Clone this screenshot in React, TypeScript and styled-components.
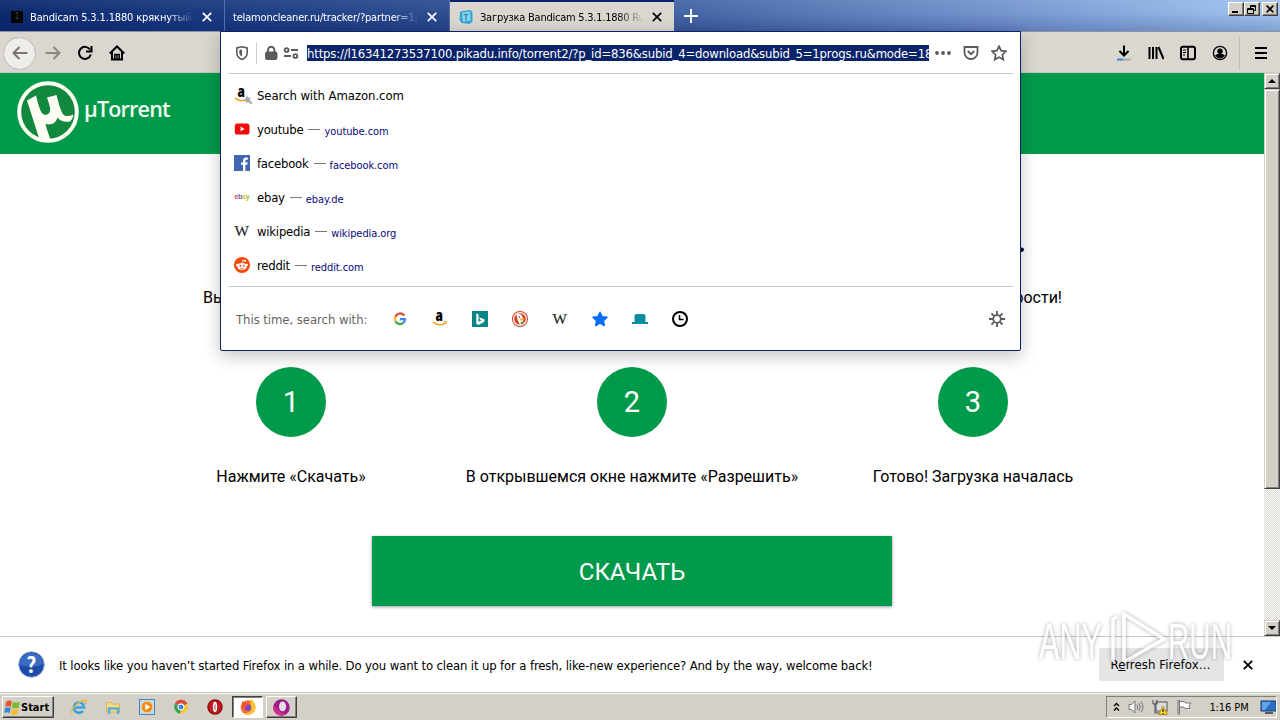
import React from 'react';
import styled, { createGlobalStyle, css } from 'styled-components';

const UI = `"DejaVu Sans Condensed", "DejaVu Sans", sans-serif`;
const WEB = `Roboto, sans-serif`;
const GREEN = '#019a4b';

const Global = createGlobalStyle`
  * { box-sizing: border-box; }
  body { margin: 0; overflow: hidden; background: #fff; }
  svg { display: block; flex: none; }
`;

const Screen = styled.div`
  position: relative;
  width: 1280px;
  height: 720px;
  display: flex;
  flex-direction: column;
  overflow: hidden;
  font-family: ${UI};
  font-stretch: condensed;
  color: #000;
`;

const Label = styled.span<{ $size?: number; $ls?: number; $color?: string }>`
  font-size: ${p => p.$size ?? 13}px;
  letter-spacing: ${p => p.$ls ?? 0}px;
  color: ${p => p.$color ?? 'inherit'};
  white-space: nowrap;
`;

/* Tab strip */
const TabStrip = styled.header`
  height: 32px;
  flex: none;
  display: flex;
  align-items: flex-start;
  background: linear-gradient(180deg, rgba(255,255,255,0.06), rgba(255,255,255,0) 40%, rgba(0,10,90,0.2)),
    linear-gradient(90deg, #0c2a6e 0, #1d3e84 240px, #3e5f9f 640px, #7596cf 1000px, #a2c6f0 1280px);
  border-bottom: 1px solid #8c93a4;
`;

const Tab = styled.div<{ $width: number; $active?: boolean }>`
  width: ${p => p.$width}px;
  height: 31px;
  display: flex;
  align-items: center;
  padding: 3px 12px 0 8px;
  color: #fff;
  border-right: 1px solid #5670a8;
  ${p => p.$active && css`
    color: #000;
    background: #dad6d0;
    border-top: 2px solid #0a246a;
    border-right: 0;
    padding-top: 1px;
  `}
`;

const TabTitle = styled.div<{ $gap?: number }>`
  flex: 1;
  overflow: hidden;
  margin: 0 8px 0 ${p => p.$gap ?? 0}px;
  display: flex;
  mask-image: linear-gradient(90deg, #000 calc(100% - 26px), transparent);
`;

const BlackFavicon = styled.i`
  width: 12px;
  height: 12px;
  margin-left: 3px;
  background: #050505;
  color: #444;
  font: normal 8px/12px ${UI};
  text-align: center;
`;

const NewTab = styled.div`
  padding: 9px 0 0 9px;
  flex: 1;
`;

const WindowButtons = styled.div`
  display: flex;
  padding: 2px 2px 0 0;
`;

const WinButton = styled.div<{ $gap?: boolean }>`
  width: 16px;
  height: 14px;
  margin-left: ${p => (p.$gap ? 2 : 0)}px;
  display: flex;
  align-items: center;
  justify-content: center;
  background: #d4d0c8;
  border: 1px solid;
  border-color: #fff #404040 #404040 #fff;
  box-shadow: inset -1px -1px #808080;
`;

/* Navigation toolbar */
const Toolbar = styled.nav`
  height: 41px;
  flex: none;
  display: flex;
  align-items: center;
  justify-content: space-between;
  background: #dad6d0;
  border-bottom: 1px solid #c9cac4;
  padding-top: 2px;
`;

const NavLeft = styled.div`
  display: flex;
  align-items: center;
  gap: 16px;
  padding-left: 3px;
`;

const BackButton = styled.div`
  width: 33px;
  height: 33px;
  margin-right: -7px;
  border-radius: 50%;
  border: 1px solid #bdb9b3;
  background: #efedea;
  display: flex;
  align-items: center;
  justify-content: center;
`;

const NavRight = styled.div`
  display: flex;
  align-items: center;
  gap: 16px;
  padding-right: 11px;
`;

const MenuGroup = styled.div`
  display: flex;
  align-items: center;
  gap: 13px;
  margin-left: -5px;
`;

const Divider = styled.i<{ $h: number; $color: string }>`
  width: 1px;
  height: ${p => p.$h}px;
  background: ${p => p.$color};
`;

/* Page */
const Viewport = styled.div`
  height: 563px;
  flex: none;
  display: flex;
`;

const Page = styled.main`
  width: 1264px;
  display: flex;
  flex-direction: column;
  align-items: center;
  font-family: ${WEB};
  font-stretch: normal;
`;

const SiteHeader = styled.div`
  align-self: stretch;
  height: 81px;
  flex: none;
  background: ${GREEN};
  padding: 8px 0 0 17px;
  display: flex;
  gap: 5px;
`;

const SiteName = styled.span`
  font: 600 21.5px/30px "Open Sans", sans-serif;
  letter-spacing: -0.8px;
  color: #f2fbf2;
  padding-top: 13px;
`;

const Heading = styled.h1`
  width: 788px;
  height: 60px;
  margin: 57px 0 0;
  text-align: right;
  font-size: 32px;
  line-height: 60px;
`;

const Lead = styled.p`
  width: 860px;
  margin: 17px 0 0;
  padding-left: 1px;
  display: flex;
  justify-content: space-between;
  font-size: 16px;
  line-height: 20px;
`;

const Steps = styled.div`
  display: grid;
  grid-template-columns: repeat(3, 341px);
  margin-top: 59px;
`;

const Step = styled.div`
  display: flex;
  flex-direction: column;
  align-items: center;
`;

const StepNumber = styled.div`
  width: 70px;
  height: 70px;
  border-radius: 50%;
  background: ${GREEN};
  color: #fff;
  font-size: 29px;
  line-height: 71px;
  text-align: center;
`;

const StepText = styled.div`
  margin-top: 30px;
  font-size: 16px;
  line-height: 20px;
  white-space: nowrap;
`;

const Download = styled.button`
  width: 520px;
  height: 70px;
  margin-top: 49px;
  padding: 2px 0 0;
  border: 0;
  background: ${GREEN};
  box-shadow: 0 1px 3px rgba(0, 0, 0, 0.4);
  color: #fff;
  font: 400 24px ${WEB};
`;

const Scrollbar = styled.div`
  width: 16px;
  display: flex;
  flex-direction: column;
  background: repeating-conic-gradient(#fff 0 25%, #d9d6d0 0 50%) 0 0 / 2px 2px;
`;

const Bevel = styled.div<{ $h: number }>`
  height: ${p => p.$h}px;
  flex: none;
  background: #d4d0c8;
  border: 1px solid;
  border-color: #d4d0c8 #404040 #404040 #d4d0c8;
  box-shadow: inset 1px 1px #fff, inset -1px -1px #808080;
  display: flex;
  align-items: center;
  justify-content: center;
`;

const Track = styled.div`flex: 1;`;

/* Address dropdown */
const Dropdown = styled.section`
  position: absolute;
  left: 220px;
  top: 31px;
  width: 801px;
  height: 320px;
  padding: 0 7px;
  background: #fff;
  border: 1px solid #0a246a;
  border-radius: 0 0 2px 2px;
  box-shadow: 0 5px 18px rgba(0, 0, 0, 0.24);
`;

const AddressRow = styled.div`
  height: 42px;
  display: flex;
  align-items: center;
  justify-content: space-between;
  border-bottom: 1px solid #cbc9c6;
  padding: 1px 6px 0 6px;
`;

const AddressIcons = styled.div<{ $gap: number }>`
  display: flex;
  align-items: center;
  gap: ${p => p.$gap}px;
`;

const Url = styled.div`
  width: 622px;
  height: 16px;
  margin: 0 -2px 0 0;
  overflow: hidden;
  background: #0a246a;
  color: #fff;
  line-height: 17px;
  display: flex;
`;

const Results = styled.div`
  height: 213px;
  padding-top: 4px;
  border-bottom: 1px solid #cbc9c6;
`;

const Result = styled.div`
  height: 34px;
  display: flex;
  align-items: center;
  padding-left: 6px;

  & > svg { margin-right: 7px; }
`;

const Dash = styled.i`
  width: 12px;
  height: 1px;
  margin: 0 4px 0 5px;
  background: #777;
`;

const Domain = styled(Label)`padding-top: 4px;`;

const Engines = styled.div`
  height: 64px;
  display: flex;
  align-items: center;
  padding: 0 8px;
`;

const EngineIcons = styled.div`
  flex: 1;
  display: flex;
  gap: 24px;
`;

const EnginePrompt = styled.div`
  width: 156px;
  padding-bottom: 2px;
  color: #66645f;
`;

/* Notification bar */
const Notice = styled.aside`
  height: 57px;
  flex: none;
  display: flex;
  align-items: center;
  border-top: 1px solid #c9c8c5;
  border-bottom: 1px solid #c2bfb9;
  padding: 0 27px 0 18px;
`;

const NoticeText = styled.div`
  flex: 1;
  padding-left: 14px;
`;

const RefreshButton = styled.div`
  width: 125px;
  height: 33px;
  margin-right: 19px;
  padding-right: 2px;
  background: #e5e5e5;
  display: flex;
  align-items: center;
  justify-content: center;
`;

/* Taskbar */
const Taskbar = styled.footer`
  height: 27px;
  flex: none;
  display: flex;
  align-items: flex-start;
  background: #d4d0c8;
  border-top: 1px solid #fff;
  padding: 2px 3px 0 2px;
`;

const StartButton = styled.div`
  width: 52px;
  height: 22px;
  display: flex;
  align-items: center;
  padding-left: 1px;
  border: 1px solid;
  border-color: #fff #404040 #404040 #fff;
  box-shadow: inset -1px -1px #808080;
  font-weight: bold;
`;

const QuickLaunch = styled.div`
  flex: 1;
  display: flex;
  align-items: center;
  gap: 18px;
  height: 22px;
  padding-left: 17px;
`;

const Windows = styled.div`
  display: flex;
  gap: 3px;
  margin-left: -9px;
`;

const TaskButton = styled.div<{ $pressed?: boolean }>`
  width: 31px;
  height: 22px;
  display: flex;
  align-items: center;
  justify-content: center;
  background: ${p => (p.$pressed ? '#fff' : '#d4d0c8')};
  border: 1px solid;
  border-color: ${p => (p.$pressed ? '#404040 #fff #fff #404040' : '#fff #404040 #404040 #fff')};
  box-shadow: ${p => (p.$pressed ? 'inset 1px 1px #808080' : 'inset -1px -1px #808080')};
`;

const Tray = styled.div`
  width: 171px;
  height: 22px;
  display: flex;
  align-items: center;
  gap: 8px;
  padding: 0 0 0 6px;
  border: 1px solid;
  border-color: #808080 #fff #fff #808080;
`;

const Clock = styled.div`
  flex: 1;
  display: flex;
  justify-content: center;
  padding-left: 6px;
`;

const Watermark = styled.svg`
  position: absolute;
  left: 1032px;
  top: 602px;
  pointer-events: none;
  opacity: 0.85;
  filter: drop-shadow(0 0 2px rgba(0, 0, 0, 0.4));
`;

const Cross = ({ size = 10, color = '#000', w = 2 }: { size?: number; color?: string; w?: number }) => (
  <svg width={size} height={size} viewBox="0 0 10 10" stroke={color} strokeWidth={w} fill="none">
    <path d="M.8.8l8.4 8.4M9.2.8L.8 9.2" />
  </svg>
);

const Icon = ({ children, size = 16, color = '#000', w = 2 }: { children: React.ReactNode; size?: number; color?: string; w?: number }) => (
  <svg width={size} height={size} viewBox="0 0 16 16" fill="none" stroke={color} strokeWidth={w}>{children}</svg>
);

const Amazon = ({ search }: { search?: boolean }) => (
  <svg width="16" height="16" viewBox="0 0 16 16" overflow="visible">
    <text x="3.600" y="9.600" fontFamily="Open Sans, sans-serif" fontWeight="800" fontSize="15">a</text>
    <path d="M1 11.200c4 3.300 9 3 12.400.6" fill="none" stroke="#f6a51b" strokeWidth="1.600" />
    {search
      ? <path d="M13 8.500l1.300 2.200 2.700-.4-1.500 2.300 3 4-1.300 1-3.400-3-1.600 1.900-.6-2.700-2.600-.8 2.500-1.300z" fill="#aaa9ad" />
      : <path d="M11.500 10.800l3-.2-.8 2.800" fill="none" stroke="#f6a51b" />}
  </svg>
);

const Wiki = () => (
  <svg width="16" height="16" viewBox="0 0 16 16">
    <text x="0.500" y="12.800" fontFamily="Liberation Serif, serif" fontSize="15.500" textLength="14.500" lengthAdjust="spacingAndGlyphs" fill="#222" stroke="#222" strokeWidth=".15">W</text>
  </svg>
);

const Youtube = () => (
  <svg width="16" height="16" viewBox="0 0 16 16">
    <rect x="0.800" y="2.500" width="14.700" height="11" rx="2.600" fill="#f00b0b" />
    <path d="M6.600 5.600v4.600L10.600 8z" fill="#fff" />
  </svg>
);

const Facebook = () => (
  <svg width="16" height="16" viewBox="0 0 16 16">
    <rect width="16" height="16" fill="#4267b2" />
    <path d="M9 16V9.800H7V7.500h2V5.800C9 3.600 10.300 2.600 12 2.600h1.800v2.200h-1.200c-1 0-1.200.5-1.200 1.200v1.500h2.300l-.3 2.300h-2V16z" fill="#fff" />
  </svg>
);

const Ebay = () => (
  <svg width="16" height="16" viewBox="0 0 16 16" overflow="visible">
    <text x="0.400" y="10" fontFamily="Liberation Sans, sans-serif" fontSize="8" textLength="15" lengthAdjust="spacingAndGlyphs" strokeWidth=".2">
      <tspan fill="#d8354a" stroke="#d8354a">e</tspan><tspan fill="#4550c0" stroke="#4550c0">b</tspan><tspan fill="#e6b92c" stroke="#e6b92c">a</tspan><tspan fill="#8bbd20" stroke="#8bbd20">y</tspan>
    </text>
  </svg>
);

const Reddit = () => (
  <svg width="16" height="16" viewBox="0 0 16 16">
    <circle cx="8" cy="8" r="8" fill="#f9490c" />
    <ellipse cx="8" cy="9.400" rx="4.600" ry="3.400" fill="#fff" />
    <circle cx="3.400" cy="8" r="1.300" fill="#fff" />
    <circle cx="12.600" cy="8" r="1.300" fill="#fff" />
    <circle cx="11" cy="3.800" r="1.100" fill="#fff" />
    <path d="M8 6.200l.7-2.900 2.200.5" fill="none" stroke="#fff" strokeWidth=".8" />
    <circle cx="6.300" cy="8.700" r="1" fill="#f9490c" />
    <circle cx="9.700" cy="8.700" r="1" fill="#f9490c" />
    <path d="M6 11q2 1.100 4 0" fill="none" stroke="#f9490c" strokeWidth=".7" />
  </svg>
);

const Google = () => (
  <svg width="16" height="16" viewBox="0 0 16 16" fill="none" strokeWidth="2.200">
    <path d="M12.300 4.600A5 5 0 0 0 3.500 5.800" stroke="#ea4335" />
    <path d="M3.500 5.800a5 5 0 0 0 0 4.400" stroke="#fbbc05" />
    <path d="M3.500 10.200a5 5 0 0 0 7.900 1.500" stroke="#34a853" />
    <path d="M11.400 11.700A5 5 0 0 0 13 8.200H8" stroke="#4285f4" />
  </svg>
);

const Bing = () => (
  <svg width="16" height="16" viewBox="0 0 16 16">
    <rect width="16" height="16" fill="#0c8484" />
    <path d="M4.300 2.500l2.200.8v7.600l3-1.600-1.500-.7-.9-2.300 5.200 1.900v2.500l-5.800 3.300-2.200-1.300z" fill="#fff" />
  </svg>
);

const Duck = () => (
  <svg width="16" height="16" viewBox="0 0 16 16">
    <circle cx="8" cy="8" r="8" fill="#d43a24" />
    <circle cx="8" cy="8" r="6.400" fill="none" stroke="#fff" strokeWidth="1.300" />
    <path d="M4.500 3.500c3-1.500 6.500.5 6.300 3.500L11.500 13l-3.500 1.300L5.500 9z" fill="#fff" />
    <circle cx="7.500" cy="6" r=".8" fill="#345" />
    <path d="M8 7.600l4.500-.4-.4 2-3.900.4z" fill="#fbb02d" />
    <path d="M8.500 11l3-.8v3l-2.600.2z" fill="#5aa83c" />
  </svg>
);

const STAR = 'M8 1.200l2.100 4.500 4.900.6-3.600 3.400.9 4.900L8 12.200l-4.300 2.400.9-4.900L1 6.300l4.900-.6z';

const Logo = () => (
  <svg width="62" height="62" viewBox="0 0 62 62">
    <circle cx="31" cy="31" r="28.800" fill="#12883e" stroke="#fffef4" strokeWidth="4" />
    <path d="M10 19.500l9-5c1.500 6 3.500 14 6 17.500 2.500 3.300 7.500 2 8.200-2.500.4-3-1.600-8-3.200-13l9.500-2.500c2 8 4 15 6 18.500 2 3 5 3.500 11 1-.5 3-1.500 5-3.500 7-5 1-9.500 0-12.500-4-1.500 5.500-6.500 8-12 6.500 1.500 6 3.500 11.500 5.500 17-4.500 0-9-1-12-3z" fill="#fffef4" />
  </svg>
);

const results = [
  { icon: <Youtube />, name: 'youtube', domain: 'youtube.com' },
  { icon: <Facebook />, name: 'facebook', domain: 'facebook.com' },
  { icon: <Ebay />, name: 'ebay', domain: 'ebay.de' },
  { icon: <Wiki />, name: 'wikipedia', domain: 'wikipedia.org' },
  { icon: <Reddit />, name: 'reddit', domain: 'reddit.com' },
];

const steps = ['Нажмите «Скачать»', 'В открывшемся окне нажмите «Разрешить»', 'Готово! Загрузка началась'];

export default function App() {
  return (
    <Screen>
      <Global />
      <TabStrip>
        <Tab $width={225}>
          <BlackFavicon>1</BlackFavicon>
          <TabTitle $gap={7}><Label $size={11} $ls={-0.14}>Bandicam 5.3.1.1880 крякнутый</Label></TabTitle>
          <Cross color="#fff" w={1.7} />
        </Tab>
        <Tab $width={225}>
          <TabTitle><Label $size={11} $ls={-0.18}>telamoncleaner.ru/tracker/?partner=1p</Label></TabTitle>
          <Cross color="#fff" w={1.7} />
        </Tab>
        <Tab $width={224} $active>
          <svg width="16" height="16" viewBox="0 0 16 16">
            <path d="M2 2.500L12.500 1l2 2v9.500L12 15 3.500 14 1.500 11z" fill="#35a5d3" />
            <path d="M4 3.500l8-.8.600 8.800-7.600 1.200z" fill="#8bd5ee" />
            <path d="M5.500 5.500h5M8 5.500v6" stroke="#3f8fb5" strokeWidth="1.500" />
          </svg>
          <TabTitle $gap={6}><Label $size={11} $ls={-0.24}>Загрузка Bandicam 5.3.1.1880 Ru</Label></TabTitle>
          <Cross w={1.7} />
        </Tab>
        <NewTab>
          <svg width="16" height="14" viewBox="0 0 16 14" stroke="#fff" strokeWidth="2"><path d="M1 7h14M8 0v14" /></svg>
        </NewTab>
        <WindowButtons>
          <WinButton><svg width="10" height="9"><rect x="1" y="6" width="6" height="2" /></svg></WinButton>
          <WinButton>
            <svg width="10" height="9" fill="none" stroke="#000"><path d="M3.500 3V.5h5v5H7M3 1.500h6M.5 3.500h6v5h-6zM.5 4.500h6" /></svg>
          </WinButton>
          <WinButton $gap><Cross size={8} w={2} /></WinButton>
        </WindowButtons>
      </TabStrip>

      <Toolbar>
        <NavLeft>
          <BackButton><Icon color="#77746f"><path d="M15.500 8H1.500M7.500 2L1.500 8l6 6" /></Icon></BackButton>
          <Icon color="#8b8883"><path d="M.5 8h14M8.500 2l6 6-6 6" /></Icon>
          <Icon><path d="M13 4.500a6 6 0 1 0 .8 5M14.500 1v5.500H9" /></Icon>
          <Icon><path d="M.8 8.500L8 1.500l7.200 7M3 7v7.500h10V7" /><path d="M8 14V9M5.800 14V9.500h4.400V14" strokeWidth="1.500" /></Icon>
        </NavLeft>
        <NavRight>
          <Icon>
            <path d="M8 .5v9.500M3.500 6L8 10.500 12.500 6" />
            <path d="M1 14.500h6" stroke="#3585d8" /><path d="M7 14.500h8" stroke="#aaa" />
          </Icon>
          <Icon><path d="M1.500 2v12M5 2v12M8.500 2v12M10.500 2l5 12" /></Icon>
          <Icon><rect x="1" y="1.800" width="14" height="12.400" rx="2" /><path d="M8 2v12" strokeWidth="1.600" /><path d="M3 5h3M3 7.500h3M3 10h2" strokeWidth="1" /></Icon>
          <Icon w={1.300}><circle cx="8" cy="8" r="6.600" /><circle cx="8" cy="6.200" r="2.700" fill="#000" stroke="none" /><path d="M4 10.500c2-1.500 6-1.500 8 0-2 3-6 3-8 0z" fill="#000" /></Icon>
          <MenuGroup>
            <Divider $h={33} $color="#c3c0ba" />
            <Icon><path d="M2 3h12M2 8h12M2 13h12" /></Icon>
          </MenuGroup>
        </NavRight>
      </Toolbar>

      <Viewport>
        <Page>
          <SiteHeader>
            <Logo />
            <SiteName>µTorrent</SiteName>
          </SiteHeader>
          <Heading>.</Heading>
          <Lead><span>Вы</span><span>скорости!</span></Lead>
          <Steps>
            {steps.map((text, i) => (
              <Step key={text}>
                <StepNumber>{i + 1}</StepNumber>
                <StepText>{text}</StepText>
              </Step>
            ))}
          </Steps>
          <Download>СКАЧАТЬ</Download>
        </Page>
        <Scrollbar>
          <Bevel $h={16}><svg width="8" height="4"><path d="M0 4L4 0l4 4z" /></svg></Bevel>
          <Bevel $h={400} />
          <Track />
          <Bevel $h={16}><svg width="8" height="4"><path d="M0 0l4 4 4-4z" /></svg></Bevel>
        </Scrollbar>
      </Viewport>

      <Notice>
        <svg width="27" height="27" viewBox="0 0 27 27">
          <circle cx="13.500" cy="13.500" r="12.800" fill="#1c4ba8" stroke="#9eb2d8" />
          <path d="M2 14a11.500 11.500 0 0 1 23-1q-9 5-23 1z" fill="#3b6cc4" />
          <text x="13.500" y="21.500" textAnchor="middle" fontFamily="Open Sans, sans-serif" fontWeight="700" fontSize="23" fill="#fff">?</text>
        </svg>
        <NoticeText><Label $ls={-0.139}>It looks like you haven’t started Firefox in a while. Do you want to clean it up for a fresh, like-new experience? And by the way, welcome back!</Label></NoticeText>
        <RefreshButton><Label $ls={0.12}>R<u>e</u>fresh Firefox…</Label></RefreshButton>
        <Cross w={1.800} />
      </Notice>

      <Taskbar>
        <StartButton>
          <svg width="17" height="17" viewBox="0 0 15 15">
            <path d="M2 2.500q2.500-2 5-.5L6 7Q3.500 5.500 1 7z" fill="#e8552a" />
            <path d="M8 2.500q2.500 1.500 6 0L13 7.500q-3 1.500-6 0z" fill="#7ab82c" />
            <path d="M1 8q2.500-1.500 5 0L5 12.500q-2.500-1.500-5 0z" fill="#3a87d8" />
            <path d="M7 8.500q3 1.500 5.800 0l-1 4.700q-3 1.500-5.800 0z" fill="#f5bd2a" />
          </svg>
          <Label $size={11}>Start</Label>
        </StartButton>
        <QuickLaunch>
          <Icon size={16} w={2.600} color="#35a3df"><path d="M2.800 8.500h10.400A5.200 5.200 0 1 0 12 12" /><path d="M1 14.500C-1 11 8 1 14.800 1.500q1 1-.8 3.500" stroke="#e9b93b" strokeWidth="1.300" /></Icon>
          <Icon w={1}><path d="M1.500 13V3.500h5l1 1.500h7v8z" fill="#f7dd83" stroke="#d8b552" /><path d="M4 15V9.500h9V15" stroke="#5aaede" strokeWidth="2.500" /></Icon>
          <Icon w={1}><rect x=".5" y=".5" width="15" height="15" fill="#bcdcf5" stroke="#4186c0" /><circle cx="8" cy="8" r="5.800" fill="#f28a18" stroke="#fbd08c" /><path d="M6.300 4.800v6.400L11.300 8z" fill="#fff" stroke="none" /></Icon>
          <Icon w={3.500}><path d="M3.300 5.200A5.500 5.500 0 0 1 12.900 5.500" stroke="#e0483a" /><path d="M3.300 5.200a5.500 5.500 0 0 0 4.200 7.700" stroke="#35a551" /><path d="M12.900 5.500a5.500 5.500 0 0 1-5.400 7.500" stroke="#f8c62d" /><circle cx="8" cy="8" r="3" fill="#4284ee" stroke="#fff" strokeWidth="1" /></Icon>
          <Icon><circle cx="8" cy="8" r="7" fill="#c21a1d" stroke="#8d0f12" strokeWidth="1.500" /><ellipse cx="8" cy="8" rx="1.300" ry="4.300" stroke="#fff" strokeWidth="1.700" fill="#a01216" /></Icon>
          <Windows>
            <TaskButton $pressed>
              <Icon w={0}><circle cx="8" cy="8.500" r="7.300" fill="#f9682c" /><path d="M11 0c4 3 6 8 3.500 12S5 17 3 14c6 1 10-3 8-7-1-2-1-4 0-7z" fill="#fdc22f" /><circle cx="7.800" cy="8.500" r="3.300" fill="#7a46d4" /><path d="M2 2l3 2.500 3 .5-2 3-4 1z" fill="#f9502c" /></Icon>
            </TaskButton>
            <TaskButton>
              <Icon size={17} w={0}><circle cx="8" cy="8" r="7.800" fill="#9c1d8c" /><path d="M.5 6A7.800 7.800 0 0 0 14 13q-5 2-8-2z" fill="#d12c8c" /><ellipse cx="9" cy="7" rx="3.300" ry="4.600" fill="#e6dfe4" /></Icon>
            </TaskButton>
          </Windows>
        </QuickLaunch>
        <Tray>
          <svg width="7" height="10" viewBox="0 0 7 10" fill="none" stroke="#000" strokeWidth="1.300"><path d="M1 4l2.500-2.500L6 4M1 8.500L3.500 6 6 8.500" /></svg>
          <Icon w={1} color="#777"><path d="M1 5.500h2.500L7 2v12L3.500 10.500H1z" fill="#f4f4f4" /><path d="M9 5.500q1.500 2.500 0 5M11 4q2.800 4 0 8M13 2.500q4 5.500 0 11" /></Icon>
          <Icon w={1} color="#555"><rect x="4" y="3" width="11" height="9" fill="#d9dce0" /><path d="M1 1v4h4V1M3 5v9h5" stroke="#444" /><path d="M11 7l4.500 8.500h-9z" fill="#fbd42d" stroke="#b3901a" /><path d="M11 10v3M11 14v1" stroke="#000" /></Icon>
          <Icon w={1} color="#777"><path d="M2 1v14.500M3.500 1v14.500M3.500 2.500h5l1 1.500H15l-2 3 1 2.500H9L8 8H3.500z" fill="#fff" /></Icon>
          <Clock><Label $size={11} $ls={-0.1}>1:16 PM</Label></Clock>
          <Icon w={1}><rect x="1" y="2" width="15" height="10" fill="#2c6fc7" stroke="#173c78" /><path d="M2 3h9L5 11H2z" fill="#64a5e8" stroke="none" /><path d="M5 14h8" stroke="#333" strokeWidth="1.500" /></Icon>
        </Tray>
      </Taskbar>

      <Dropdown>
        <AddressRow>
          <AddressIcons $gap={6}>
            <Icon color="#5c5b59" w={1.600}><path d="M8 1.800L13.200 3v4.500c0 3.500-2.200 5.800-5.200 7-3-1.200-5.200-3.500-5.200-7V3z" /><path d="M8 4.500v7c-1.800-1-2.700-2.500-2.700-4.300V5z" fill="#5c5b59" stroke="none" /></Icon>
            <Divider $h={22} $color="#cfcfcf" />
            <AddressIcons $gap={4}>
              <Icon color="#5c5b59" w={1.900}><rect x="3" y="7.500" width="10.500" height="6.500" rx="1" fill="#5c5b59" /><path d="M5 8V5a3.200 3.200 0 0 1 6.400 0v3" /></Icon>
              <Icon color="#5c5b59" w={1.900}><circle cx="3.600" cy="5" r="1.900" /><path d="M8 5h7M1 11h7" /><circle cx="12.400" cy="11" r="1.900" /></Icon>
            </AddressIcons>
          </AddressIcons>
          <Url><Label $ls={-0.18}>https://l16341273537100.pikadu.info/torrent2/?p_id=836&amp;subid_4=download&amp;subid_5=1progs.ru&amp;mode=18</Label></Url>
          <AddressIcons $gap={12}>
            <Icon w={0}><g fill="#5c5b59"><circle cx="2" cy="8" r="1.900" /><circle cx="8" cy="8" r="1.900" /><circle cx="14" cy="8" r="1.900" /></g></Icon>
            <Icon color="#5c5b59" w={1.800}><path d="M1.500 2h13v5.500a6.500 6.500 0 0 1-13 0z" /><path d="M4.800 6L8 9.200 11.200 6" /></Icon>
            <Icon color="#5c5b59" w={1.700}><path d={STAR} /></Icon>
          </AddressIcons>
        </AddressRow>
        <Results>
          <Result><Amazon search /><Label $ls={-0.07}>Search with Amazon.com</Label></Result>
          {results.map(r => (
            <Result key={r.name}>
              {r.icon}
              <Label $ls={-0.24}>{r.name}</Label>
              <Dash />
              <Domain $size={11} $ls={-0.08} $color="#0a0a78">{r.domain}</Domain>
            </Result>
          ))}
        </Results>
        <Engines>
          <EnginePrompt><Label $ls={-0.06}>This time, search with:</Label></EnginePrompt>
          <EngineIcons>
            <Google />
            <Amazon />
            <Bing />
            <Duck />
            <Wiki />
            <Icon w={1}><path d={STAR} fill="#0a6cf0" stroke="#0a6cf0" strokeWidth="1.500" strokeLinejoin="round" /></Icon>
            <Icon w={0}><path d="M2.500 11V5Q2.500 3 4.500 3h7q2 0 2 2v6H16v2H0v-2z" fill="#0d8ba5" /></Icon>
            <Icon w={2}><circle cx="8" cy="8" r="7" /><path d="M7.500 4v4.500h4" strokeWidth="1.500" /></Icon>
          </EngineIcons>
          <Icon color="#5c5b59" w={1.800}><circle cx="8" cy="8" r="3.800" /><path d="M8 0v4M8 12v4M0 8h4M12 8h4M2.500 2.500l2.700 2.700M10.800 10.800l2.700 2.700M13.500 2.500l-2.700 2.700M5.200 10.800l-2.700 2.700" /></Icon>
        </Engines>
      </Dropdown>

      <Watermark width="208" height="70" viewBox="0 0 208 70">
        <g fontFamily="Liberation Sans, sans-serif" fontSize="50" fill="#fff">
          <text x="7" y="57" textLength="63" lengthAdjust="spacingAndGlyphs">ANY</text>
          <text x="136" y="57" textLength="64" lengthAdjust="spacingAndGlyphs">RUN</text>
        </g>
        <path d="M81 60V17l4-2M92 60V12l40 25-40 23" fill="none" stroke="#fff" strokeWidth="3.500" strokeLinejoin="round" />
      </Watermark>
    </Screen>
  );
}
